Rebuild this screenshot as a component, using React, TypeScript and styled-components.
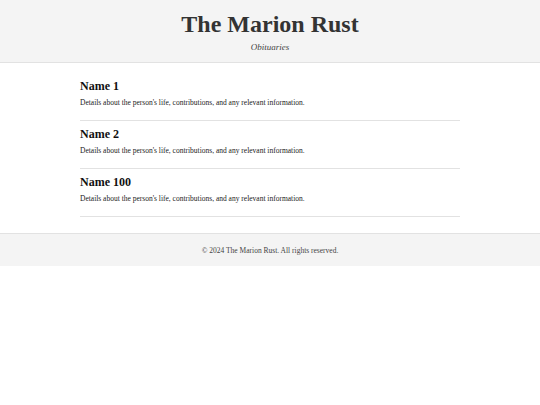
import React from "react";
import styled, { createGlobalStyle } from "styled-components";

const Global = createGlobalStyle`
  html, body { margin: 0; padding: 0; background: #ffffff; }
  body { font-family: "Liberation Serif", Georgia, serif; color: #333; }
`;

const Header = styled.header`
  background: #f4f4f4;
  border-bottom: 1px solid #e2e2e2;
  height: 62px;
  display: flex;
  flex-direction: column;
  align-items: center;
`;

const Title = styled.h1`
  margin: 10px 0 0;
  font-size: 24px;
  line-height: 28px;
  font-weight: bold;
  color: #333;
`;

const Subtitle = styled.p`
  margin: 3px 0 0;
  font-size: 9px;
  line-height: 12px;
  font-style: italic;
  color: #444;
`;

const Main = styled.main`
  width: 380px;
  margin: 0 auto;
  padding: 15px 0 16px;
`;

const Entry = styled.article`
  border-bottom: 1px solid #e2e2e2;
  padding: 0 0 12px;
  & + & { margin-top: 5px; }
`;

const Name = styled.h2`
  margin: 0;
  font-size: 12px;
  line-height: 16px;
  font-weight: bold;
  color: #111;
`;

const Details = styled.p`
  margin: 3px 0 0;
  font-size: 7.5px;
  line-height: 11px;
  color: #222;
`;

const Footer = styled.footer`
  background: #f4f4f4;
  border-top: 1px solid #e2e2e2;
  height: 32px;
  display: flex;
  align-items: center;
  justify-content: center;
  font-size: 7.5px;
  color: #444;
`;

const people = ["Name 1", "Name 2", "Name 100"];

export default function App() {
  return (
    <>
      <Global />
      <Header>
        <Title>The Marion Rust</Title>
        <Subtitle>Obituaries</Subtitle>
      </Header>
      <Main>
        {people.map((n) => (
          <Entry key={n}>
            <Name>{n}</Name>
            <Details>Details about the person's life, contributions, and any relevant information.</Details>
          </Entry>
        ))}
      </Main>
      <Footer>© 2024 The Marion Rust. All rights reserved.</Footer>
    </>
  );
}
